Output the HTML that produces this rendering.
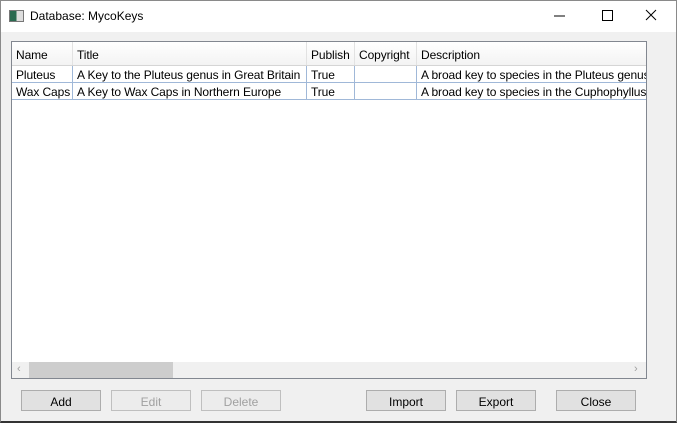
<!DOCTYPE html>
<html><head><style>
*{box-sizing:border-box;margin:0;padding:0}
body{width:677px;height:423px;overflow:hidden;background:#f0f0f0;font-family:"Liberation Sans",sans-serif;font-size:12px;color:#000;position:relative}
.win{position:absolute;left:0;top:0;width:677px;height:423px;border:1px solid #8a8a8a;border-bottom:2px solid #333}
.title{position:absolute;left:0;top:0;width:675px;height:31px;background:#fff}
.title .t{position:absolute;left:29px;top:8px;font-size:12px}
.ico{position:absolute;left:8px;top:9px;width:15px;height:12px;border:1px solid #777;background:linear-gradient(90deg,#2a6a50 0 50%,#ddd 50%)}
.grid{position:absolute;left:10px;top:40px;width:636px;height:338px;border:1px solid #828790;background:#fff;overflow:hidden}
.hdr{position:absolute;left:0;top:0;height:24px;width:634px;background:linear-gradient(#fff,#f3f3f3);border-bottom:1px solid #d5d5d5}
.c{position:absolute;height:100%;padding-left:4px;white-space:nowrap;overflow:hidden;line-height:26px;letter-spacing:-0.1px}
.hdr .c{border-right:1px solid #e2e2e2}
.row{position:absolute;left:0;height:17px;width:634px;border-bottom:1px solid #a0b8d8}
.row .c{line-height:18px;border-right:1px solid #a0b8d8}
.sb{position:absolute;left:0;top:320px;width:634px;height:16px;background:#f0f0f0}
.thumb{position:absolute;left:17px;top:0;width:144px;height:16px;background:#cdcdcd}
.btn{position:absolute;top:389px;width:80px;height:21px;border:1px solid #adadad;background:#e1e1e1;text-align:center;line-height:23px}
.dis{color:#a0a0a0;border-color:#bfbfbf;background:#ececec}
</style></head><body>
<div class="win">
<div class="title"><div class="ico"></div><span class="t">Database: MycoKeys</span>
<svg style="position:absolute;left:549px;top:8px" width="110" height="14">
<line x1="4" y1="7" x2="15" y2="7" stroke="#000"/>
<rect x="52.5" y="1.5" width="10" height="10" fill="none" stroke="#000"/>
<path d="M96 1L106 11M106 1L96 11" stroke="#000"/>
</svg></div>
<div class="grid">
<div class="hdr">
<div class="c" style="left:0;width:61px">Name</div>
<div class="c" style="left:61px;width:234px">Title</div>
<div class="c" style="left:295px;width:48px">Publish</div>
<div class="c" style="left:343px;width:62px">Copyright</div>
<div class="c" style="left:405px;width:240px;border:none">Description</div>
</div>
<div class="row" style="top:24px">
<div class="c" style="left:0;width:61px">Pluteus</div>
<div class="c" style="left:61px;width:234px">A Key to the Pluteus genus in Great Britain</div>
<div class="c" style="left:295px;width:48px">True</div>
<div class="c" style="left:343px;width:62px"></div>
<div class="c" style="left:405px;width:240px;border:none">A broad key to species in the Pluteus genus</div>
</div>
<div class="row" style="top:41px">
<div class="c" style="left:0;width:61px">Wax Caps</div>
<div class="c" style="left:61px;width:234px">A Key to Wax Caps in Northern Europe</div>
<div class="c" style="left:295px;width:48px">True</div>
<div class="c" style="left:343px;width:62px"></div>
<div class="c" style="left:405px;width:240px;border:none">A broad key to species in the Cuphophyllus</div>
</div>
<div class="sb"><div class="thumb"></div>
<span style="position:absolute;left:5px;top:1px;color:#a0a0a0;font-size:11px">‹</span>
<span style="position:absolute;left:622px;top:1px;color:#a0a0a0;font-size:11px">›</span></div>
</div>
<div class="btn" style="left:20px">Add</div>
<div class="btn dis" style="left:110px">Edit</div>
<div class="btn dis" style="left:200px">Delete</div>
<div class="btn" style="left:365px">Import</div>
<div class="btn" style="left:455px">Export</div>
<div class="btn" style="left:555px">Close</div>
</div>
</body></html>
